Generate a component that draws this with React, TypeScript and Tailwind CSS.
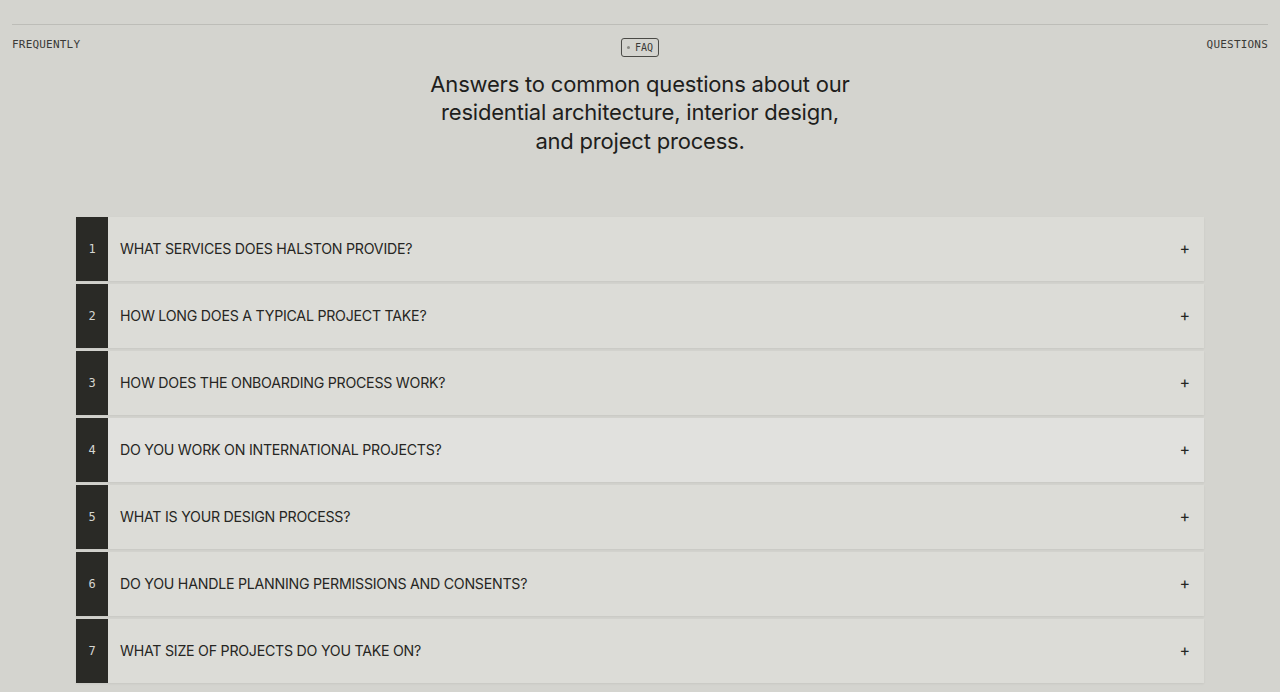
import React, { useState } from 'react';

const questions = [
  'What services does Halston provide?',
  'How long does a typical project take?',
  'How does the onboarding process work?',
  'Do you work on international projects?',
  'What is your design process?',
  'Do you handle planning permissions and consents?',
  'What size of projects do you take on?',
];

const mono = { fontFamily: '"DejaVu Sans Mono", "Liberation Mono", monospace' };
const sans = { fontFamily: 'Inter, "Noto Sans", sans-serif' };

const FaqRow: React.FC<{ index: number; question: string; active: boolean; onHover: () => void }> = ({ index, question, active, onHover }) => (
  <div
    onMouseEnter={onHover}
    className={`flex h-16 items-stretch shadow-[0_1px_2px_rgba(0,0,0,0.06)] ${active ? 'bg-[#e1e1de]' : 'bg-[#dcdcd7]'}`}
  >
    <div className="flex w-8 items-center justify-center bg-[#2a2a26] text-[12px] text-[#d6d6d1]" style={mono}>
      {index}
    </div>
    <div className="flex flex-1 items-center justify-between pl-3 pr-[14px]">
      <span className="text-[14.2px] uppercase tracking-[-0.25px] text-[#262623]" style={sans}>
        {question}
      </span>
      <span className="-mt-[2px] text-[16px] leading-none text-[#262623]" style={sans}>+</span>
    </div>
  </div>
);

export default function App() {
  const [hovered, setHovered] = useState(3);

  return (
    <div className="min-h-screen bg-[#d4d4cf] px-3 pt-6 text-[#262623]">
      <div className="border-t border-[#bdbdb8]" />
      <div className="relative flex items-start justify-between pt-[12px]">
        <span className="text-[11px] tracking-[0.2px] text-[#3a3a37]" style={mono}>FREQUENTLY</span>
        <div className="absolute left-1/2 top-[13px] flex h-[19px] -translate-x-1/2 items-center gap-[5px] rounded-[3px] border-[1.5px] border-[#4a4a46] px-[5px]">
          <span className="h-[3px] w-[3px] rounded-full bg-[#8a8a85]" />
          <span className="text-[10px] text-[#3a3a37]" style={mono}>FAQ</span>
        </div>
        <span className="text-[11px] tracking-[0.2px] text-[#3a3a37]" style={mono}>QUESTIONS</span>
      </div>

      <h1 className="mx-auto mt-[16px] max-w-[430px] text-center text-[22px] leading-[28.5px] tracking-[-0.2px] text-[#1e1e1c]" style={sans}>
        Answers to common questions about our residential architecture, interior design, and project process.
      </h1>

      <div className="mx-auto mt-[62px] flex w-[1128px] flex-col gap-[3px]">
        {questions.map((q, i) => (
          <FaqRow key={q} index={i + 1} question={q} active={hovered === i} onHover={() => setHovered(i)} />
        ))}
      </div>
    </div>
  );
}
